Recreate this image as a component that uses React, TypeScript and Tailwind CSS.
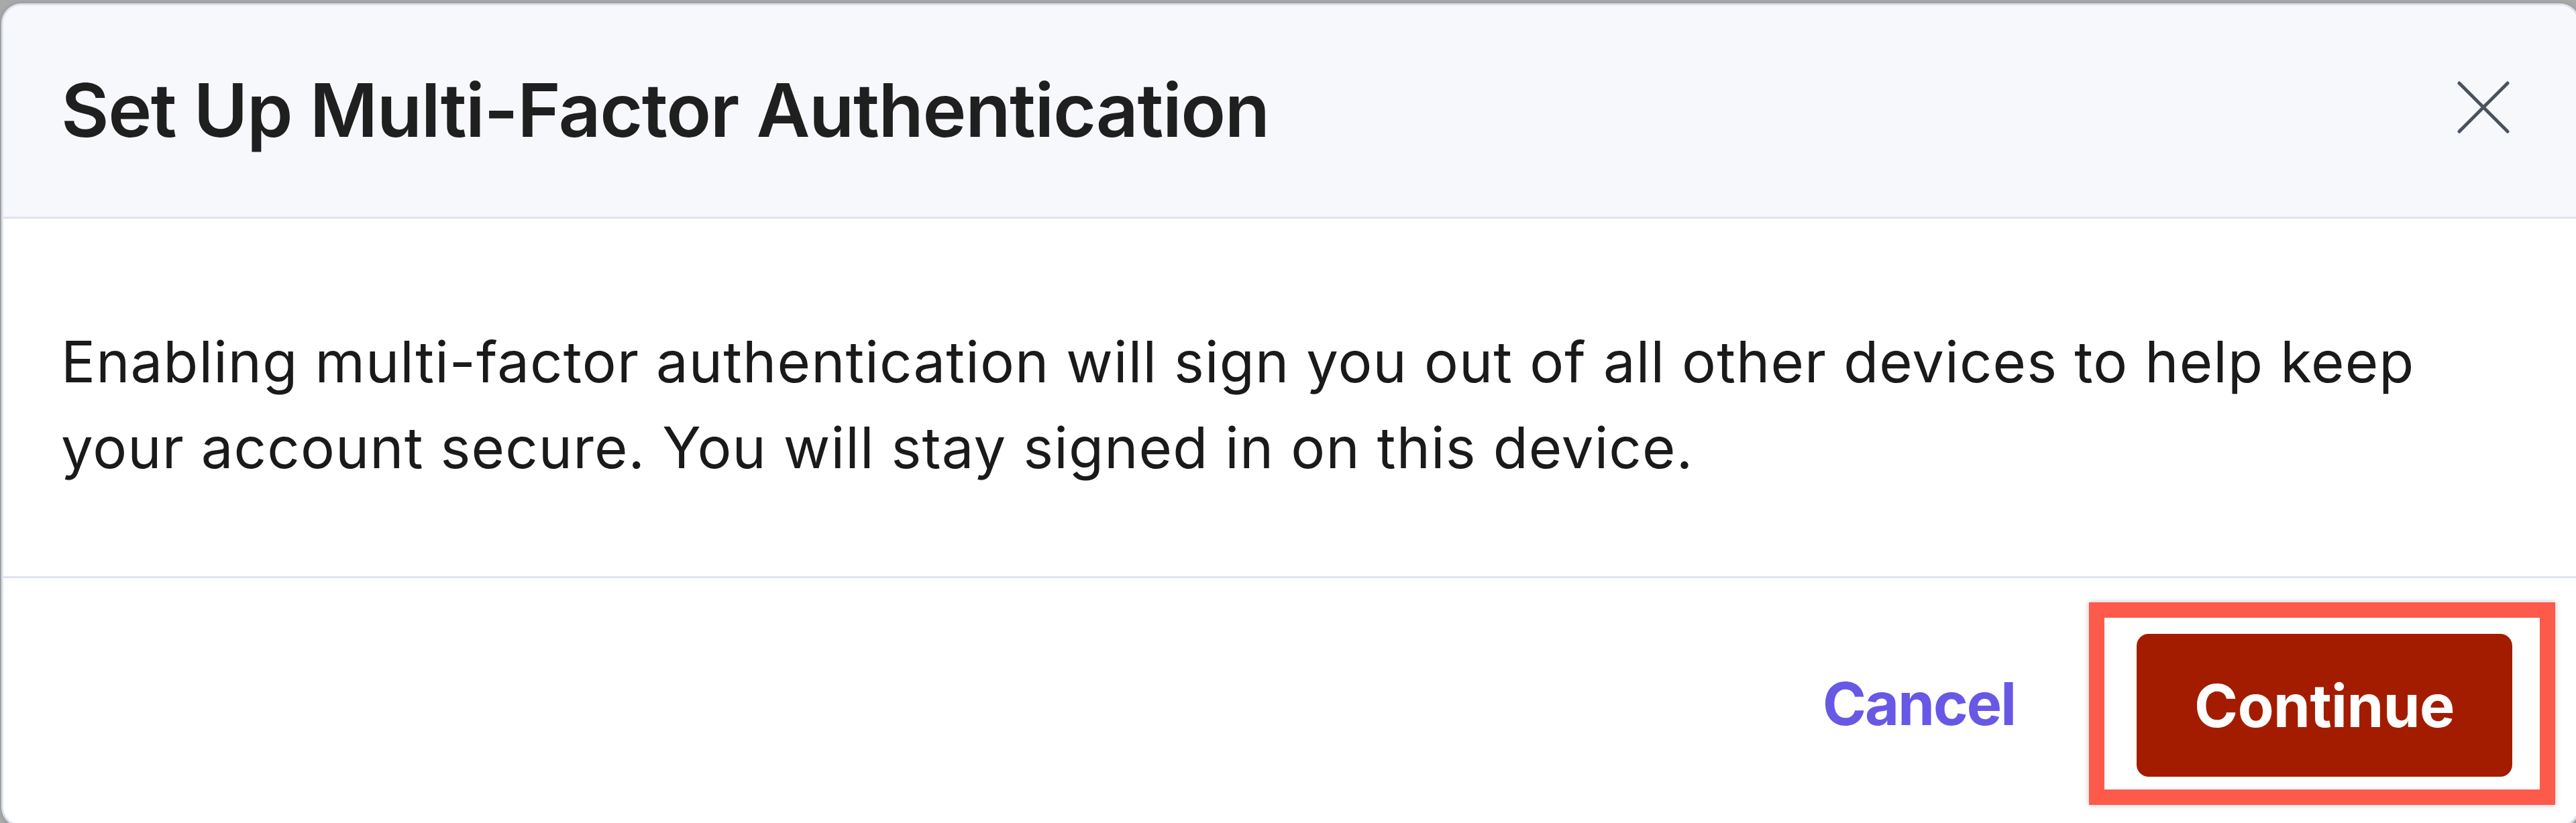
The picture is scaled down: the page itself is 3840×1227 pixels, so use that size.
export default function App() {
  return (
    <div className="w-[3840px] h-[1227px] overflow-hidden bg-[#a9a9a9] pt-[5px] pl-[2px] font-['Inter',sans-serif]">
      <div className="w-[3844px] h-[1228px] flex flex-col rounded-[30px] border-[3px] border-[#dde2ee] bg-white overflow-hidden shadow-[0_0_6px_rgba(0,0,0,0.15)]">
        {/* Header */}
        <header className="h-[318px] shrink-0 flex items-center justify-between bg-[#f7f8fc] border-b-[3px] border-[#dfe3ee] pl-[86px] pr-[102px]">
          <h2 className="text-[110px] leading-none font-semibold text-[#1f1f1f] tracking-[-1.4px] -mt-[4px]">
            Set Up Multi-Factor Authentication
          </h2>
          <button aria-label="Close" className="-mt-[11px] text-[#4a5260]">
            <svg width="78" height="78" viewBox="0 0 78 78" fill="none">
              <path d="M3 3L75 75M75 3L3 75" stroke="currentColor" strokeWidth="5" strokeLinecap="round" />
            </svg>
          </button>
        </header>

        {/* Body */}
        <section className="h-[536px] shrink-0 border-b-[3px] border-[#dfe3ee] pl-[86px] pr-[150px] pt-[150px]">
          <p className="text-[85px] leading-[128px] tracking-[1.1px] text-[#1a1a1a]">
            Enabling multi-factor authentication will sign you out of all other devices to help keep your account secure. You will stay signed in on this device.
          </p>
        </section>

        {/* Footer */}
        <footer className="flex items-center justify-end pt-[36px] pr-[34px]">
          <button className="text-[88px] leading-none font-bold tracking-[-2px] text-[#6858e6] mr-[110px]">
            Cancel
          </button>
          <div className="border-[23px] border-[#fd5a4c] bg-white pl-[48px] pr-[41px] pt-[24px] pb-[19px] shadow-[0_0_8px_rgba(0,0,0,0.25)]">
            <button className="w-[560px] h-[213px] rounded-[18px] bg-[#a31c00] text-white text-[88px] font-bold tracking-[-0.5px] leading-none">
              Continue
            </button>
          </div>
        </footer>
      </div>
    </div>
  );
}
